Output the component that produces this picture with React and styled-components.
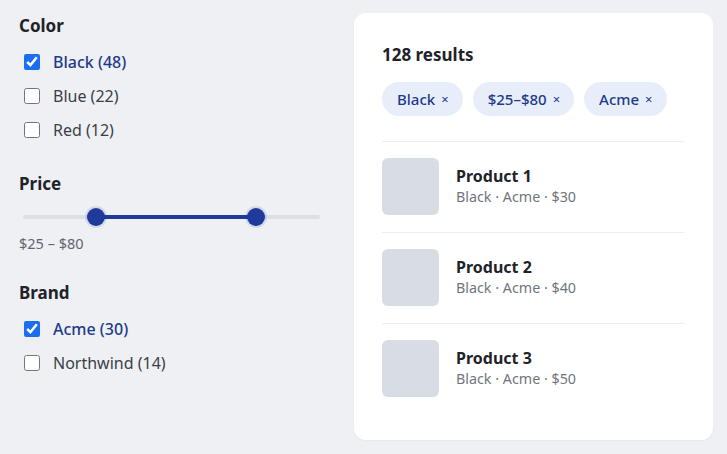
import styled, { createGlobalStyle } from "styled-components";

const GlobalStyle = createGlobalStyle`
  html, body {
    margin: 0;
    padding: 0;
    background: #eef0f3;
    font-family: "Noto Sans", "Open Sans", sans-serif;
    color: #1f2329;
  }
`;

const colors = [
  { label: "Black (48)", checked: true },
  { label: "Blue (22)", checked: false },
  { label: "Red (12)", checked: false },
];

const brands = [
  { label: "Acme (30)", checked: true },
  { label: "Northwind (14)", checked: false },
];

const chips = ["Black", "$25–$80", "Acme"];

const products = [
  { name: "Product 1", meta: "Black · Acme · $30" },
  { name: "Product 2", meta: "Black · Acme · $40" },
  { name: "Product 3", meta: "Black · Acme · $50" },
];

// slider scale
const SCALE_MIN = 0;
const SCALE_MAX = 102;
const pct = (v) => ((v - SCALE_MIN) / (SCALE_MAX - SCALE_MIN)) * 100;

const CheckList = ({ options }) => (
  <List>
    {options.map((opt) => (
      <Option key={opt.label} $checked={opt.checked}>
        <Box type="checkbox" defaultChecked={opt.checked} />
        {opt.label}
      </Option>
    ))}
  </List>
);

const App = () => {
  const min = 25;
  const max = 80;

  return (
    <Page>
      <GlobalStyle />
      <Sidebar>
        <Group>
          <Heading>Color</Heading>
          <CheckList options={colors} />
        </Group>
        <Group>
          <Heading>Price</Heading>
          <Slider>
            <Track />
            <Fill style={{ left: `${pct(min)}%`, width: `${pct(max) - pct(min)}%` }} />
            <Thumb style={{ left: `${pct(min)}%` }} />
            <Thumb style={{ left: `${pct(max)}%` }} />
          </Slider>
          <RangeText>$25 – $80</RangeText>
        </Group>
        <Group $extra={4}>
          <Heading>Brand</Heading>
          <CheckList options={brands} />
        </Group>
      </Sidebar>

      <Card>
        <Results>128 results</Results>
        <Chips>
          {chips.map((c) => (
            <Chip key={c}>
              {c} <X>×</X>
            </Chip>
          ))}
        </Chips>
        <ProductList>
          {products.map((p) => (
            <ProductRow key={p.name}>
              <Thumbnail />
              <div>
                <ProductName>{p.name}</ProductName>
                <ProductMeta>{p.meta}</ProductMeta>
              </div>
            </ProductRow>
          ))}
        </ProductList>
      </Card>
    </Page>
  );
};

const Page = styled.div`
  display: flex;
  align-items: stretch;
  gap: 28px;
  padding: 13px 14px 14px 14px;
  height: 454px;
  box-sizing: border-box;
`;

const Sidebar = styled.aside`
  width: 312px;
  padding: 1px 5px 0;
  box-sizing: border-box;
  display: flex;
  flex-direction: column;
  gap: 25px;
`;

const Group = styled.section`
  display: flex;
  flex-direction: column;
  margin-top: ${(p) => p.$extra || 0}px;
`;

const Heading = styled.h3`
  margin: 0 0 7px;
  font-size: 17px;
  line-height: 24px;
  font-weight: 700;
  color: #1f2329;
`;

const List = styled.div`
  display: flex;
  flex-direction: column;
`;

const Option = styled.label`
  display: flex;
  align-items: center;
  gap: 13px;
  height: 34px;
  font-size: 16px;
  color: ${(p) => (p.$checked ? "#1e3a8a" : "#3a3f47")};
  font-weight: ${(p) => (p.$checked ? 500 : 400)};
`;

const Box = styled.input`
  width: 16px;
  height: 16px;
  margin: 0 0 0 5px;
  accent-color: #1a6ff0;
`;

const Slider = styled.div`
  position: relative;
  height: 18px;
  margin: 5px 0 8px 4px;
  width: 297px;
`;

const Track = styled.div`
  position: absolute;
  left: 0;
  right: 0;
  top: 7px;
  height: 4px;
  border-radius: 2px;
  background: #dcdfe5;
`;

const Fill = styled.div`
  position: absolute;
  top: 7px;
  height: 4px;
  background: #1e3a9a;
`;

const Thumb = styled.div`
  position: absolute;
  top: 0;
  width: 18px;
  height: 18px;
  margin-left: -9px;
  border-radius: 50%;
  background: #1e3a9a;
  box-shadow: 0 0 0 2px rgba(30, 58, 154, 0.12);
`;

const RangeText = styled.div`
  font-size: 14.5px;
  line-height: 18px;
  color: #5f6670;
`;

const Card = styled.main`
  flex: 1;
  background: #fff;
  border-radius: 12px;
  padding: 29px 29px 28px 28px;
  box-sizing: border-box;
  box-shadow: 0 1px 2px rgba(0, 0, 0, 0.04);
`;

const Results = styled.h2`
  margin: 0 0 14px;
  font-size: 17px;
  line-height: 26px;
  font-weight: 700;
  color: #1f2329;
`;

const Chips = styled.div`
  display: flex;
  gap: 10px;
  padding-bottom: 25px;
  border-bottom: 1px solid #eceef1;
`;

const Chip = styled.span`
  display: inline-flex;
  align-items: center;
  gap: 6px;
  height: 34px;
  padding: 0 14px 0 15px;
  border-radius: 17px;
  background: #e8edfa;
  color: #1e3a8a;
  font-size: 15px;
  font-weight: 500;
`;

const X = styled.span`
  font-size: 13px;
  font-weight: 400;
`;

const ProductList = styled.div`
  display: flex;
  flex-direction: column;
`;

const ProductRow = styled.div`
  display: flex;
  align-items: center;
  gap: 17px;
  padding: 16px 0 17px;
  border-bottom: 1px solid #eceef1;

  &:last-child {
    border-bottom: none;
  }
`;

const Thumbnail = styled.div`
  width: 57px;
  height: 57px;
  border-radius: 6px;
  background: #d8dce3;
  flex-shrink: 0;
`;

const ProductName = styled.div`
  font-size: 16px;
  line-height: 21px;
  font-weight: 700;
  color: #1f2329;
`;

const ProductMeta = styled.div`
  font-size: 14.3px;
  line-height: 20px;
  color: #70757d;
`;

export default App;
